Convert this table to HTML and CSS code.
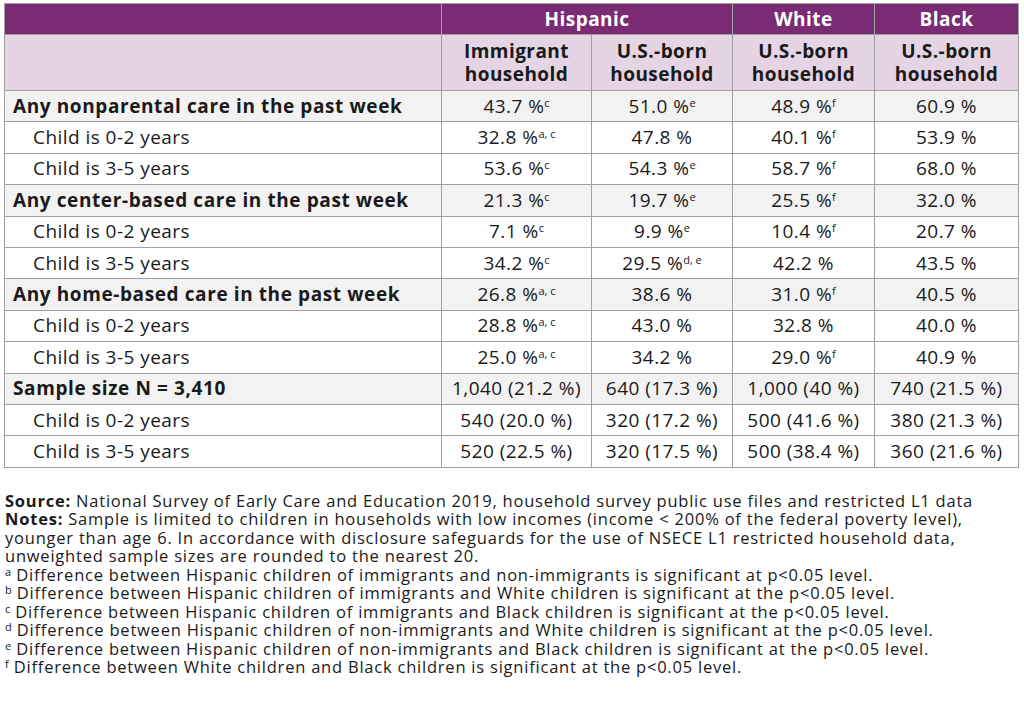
FILE: index.html
```html
<!DOCTYPE html>
<html lang="en">
<head>
<meta charset="utf-8">
<title>Nonparental care by household</title>
<link rel="stylesheet" href="styles.css">
</head>
<body>
<div class="page">
<table class="data">
  <colgroup>
    <col class="c-label"><col class="c-imm"><col class="c-us"><col class="c-white"><col class="c-black">
  </colgroup>
  <thead>
    <tr class="group">
      <th></th>
      <th colspan="2">Hispanic</th>
      <th>White</th>
      <th>Black</th>
    </tr>
    <tr class="sub">
      <th></th>
      <th>Immigrant<br>household</th>
      <th>U.S.-born<br>household</th>
      <th>U.S.-born<br>household</th>
      <th>U.S.-born<br>household</th>
    </tr>
  </thead>
  <tbody>
    <tr class="main"><td>Any nonparental care in the past week</td><td>43.7 %<sup>c</sup></td><td>51.0 %<sup>e</sup></td><td>48.9 %<sup>f</sup></td><td>60.9 %</td></tr>
    <tr class="child"><td>Child is 0-2 years</td><td>32.8 %<sup>a, c</sup></td><td>47.8 %</td><td>40.1 %<sup>f</sup></td><td>53.9 %</td></tr>
    <tr class="child"><td>Child is 3-5 years</td><td>53.6 %<sup>c</sup></td><td>54.3 %<sup>e</sup></td><td>58.7 %<sup>f</sup></td><td>68.0 %</td></tr>
    <tr class="main"><td>Any center-based care in the past week</td><td>21.3 %<sup>c</sup></td><td>19.7 %<sup>e</sup></td><td>25.5 %<sup>f</sup></td><td>32.0 %</td></tr>
    <tr class="child"><td>Child is 0-2 years</td><td>7.1 %<sup>c</sup></td><td>9.9 %<sup>e</sup></td><td>10.4 %<sup>f</sup></td><td>20.7 %</td></tr>
    <tr class="child"><td>Child is 3-5 years</td><td>34.2 %<sup>c</sup></td><td>29.5 %<sup>d, e</sup></td><td>42.2 %</td><td>43.5 %</td></tr>
    <tr class="main"><td>Any home-based care in the past week</td><td>26.8 %<sup>a, c</sup></td><td>38.6 %</td><td>31.0 %<sup>f</sup></td><td>40.5 %</td></tr>
    <tr class="child"><td>Child is 0-2 years</td><td>28.8 %<sup>a, c</sup></td><td>43.0 %</td><td>32.8 %</td><td>40.0 %</td></tr>
    <tr class="child"><td>Child is 3-5 years</td><td>25.0 %<sup>a, c</sup></td><td>34.2 %</td><td>29.0 %<sup>f</sup></td><td>40.9 %</td></tr>
    <tr class="main"><td>Sample size N = 3,410</td><td>1,040 (21.2 %)</td><td>640 (17.3 %)</td><td>1,000 (40 %)</td><td>740 (21.5 %)</td></tr>
    <tr class="child"><td>Child is 0-2 years</td><td>540 (20.0 %)</td><td>320 (17.2 %)</td><td>500 (41.6 %)</td><td>380 (21.3 %)</td></tr>
    <tr class="child"><td>Child is 3-5 years</td><td>520 (22.5 %)</td><td>320 (17.5 %)</td><td>500 (38.4 %)</td><td>360 (21.6 %)</td></tr>
  </tbody>
</table>
<div class="notes">
  <p><b>Source:</b> National Survey of Early Care and Education 2019, household survey public use files and restricted L1 data</p>
  <p><b>Notes:</b> Sample is limited to children in households with low incomes (income &lt; 200% of the federal poverty level), younger than age 6. In accordance with disclosure safeguards for the use of NSECE L1 restricted household data, unweighted sample sizes are rounded to the nearest 20.</p>
  <p><sup>a</sup> Difference between Hispanic children of immigrants and non-immigrants is significant at p&lt;0.05 level.</p>
  <p><sup>b</sup> Difference between Hispanic children of immigrants and White children is significant at the p&lt;0.05 level.</p>
  <p><sup>c</sup> Difference between Hispanic children of immigrants and Black children is significant at the p&lt;0.05 level.</p>
  <p><sup>d</sup> Difference between Hispanic children of non-immigrants and White children is significant at the p&lt;0.05 level.</p>
  <p><sup>e</sup> Difference between Hispanic children of non-immigrants and Black children is significant at the p&lt;0.05 level.</p>
  <p><sup>f</sup> Difference between White children and Black children is significant at the p&lt;0.05 level.</p>
</div>
</div>
</body>
</html>
```

FILE: styles.css
```css
html, body {
  margin: 0;
  padding: 0;
  background: #ffffff;
}

.page {
  padding: 3px 6px 0 4px;
  font-family: "Open Sans", "Noto Sans", sans-serif;
  color: #1a1a1a;
}

.data {
  border-collapse: collapse;
  table-layout: fixed;
  width: 1014px;
  font-size: 19px;
  letter-spacing: 0.45px;
}

.c-label { width: 437px; }
.c-imm { width: 150px; }
.c-us { width: 141px; }
.c-white { width: 142px; }
.c-black { width: 144px; }

.data th,
.data td {
  border: 1px solid #a0a0a0;
  padding: 0;
  line-height: 23px;
}

.group th {
  background: #7a2b73;
  color: #ffffff;
  font-weight: 700;
  height: 30px;
  text-align: center;
}

.sub th {
  background: #e4d4e4;
  font-weight: 700;
  height: 55px;
  text-align: center;
  vertical-align: middle;
}

.data tbody td {
  height: 30.4px;
  text-align: center;
  vertical-align: middle;
  white-space: nowrap;
}

.data tbody td:first-child {
  text-align: left;
}

.main td {
  background: #f2f2f2;
}

.main td:first-child {
  font-weight: 700;
  letter-spacing: 0.6px;
  padding-left: 8px;
}

.child td {
  background: #ffffff;
}

.child td:first-child {
  padding-left: 28px;
}

.data sup {
  font-size: 11px;
  letter-spacing: 0;
  line-height: 0;
  vertical-align: 6px;
}

.notes {
  margin-top: 24px;
  padding-left: 1px;
  width: 1005px;
  font-size: 16.5px;
  letter-spacing: 0.78px;
  line-height: 18.5px;
}

.notes p {
  margin: 0;
}

.notes sup {
  font-size: 11px;
  letter-spacing: 0;
  line-height: 0;
  vertical-align: 5px;
}
```
